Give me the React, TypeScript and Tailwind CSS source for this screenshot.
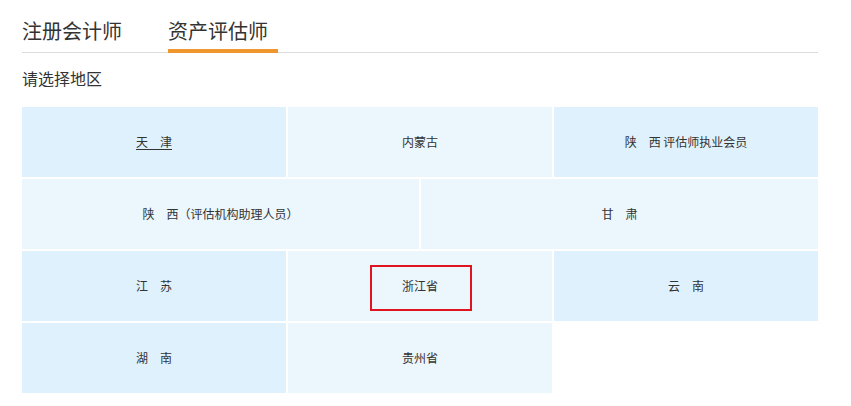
import React from "react";

type Cell = { label: string; dark: boolean; underline?: boolean; boxed?: boolean };

const rows: { cols: string; cells: Cell[] }[] = [
  {
    cols: "grid-cols-3",
    cells: [
      { label: "天　津", dark: true, underline: true },
      { label: "内蒙古", dark: false },
      { label: "陕　西 评估师执业会员", dark: true },
    ],
  },
  {
    cols: "grid-cols-2",
    cells: [
      { label: "陕　西（评估机构助理人员）", dark: false },
      { label: "甘　肃", dark: false },
    ],
  },
  {
    cols: "grid-cols-3",
    cells: [
      { label: "江　苏", dark: true },
      { label: "浙江省", dark: false, boxed: true },
      { label: "云　南", dark: true },
    ],
  },
  {
    cols: "grid-cols-3",
    cells: [
      { label: "湖　南", dark: true },
      { label: "贵州省", dark: false },
    ],
  },
];

export default function App() {
  return (
    <div
      className="min-h-[406px] w-[851px] bg-white text-[#333]"
      style={{ fontFamily: '"Noto Sans CJK SC", "Noto Sans", sans-serif' }}
    >
      <div className="ml-[22px] w-[796px] pt-[17px]">
        <div className="flex gap-[36px] border-b border-[#dddddd]">
          <div className="pr-[10px] pb-[7px] text-[20px] leading-[28px] text-[#333]">注册会计师</div>
          <div className="relative pr-[10px] pb-[7px] text-[20px] leading-[28px] text-[#333]">
            资产评估师
            <span className="absolute left-0 right-0 bottom-[-1px] h-[4px] bg-[#f0962e]" />
          </div>
        </div>
        <div className="mt-[13px] text-[16px] leading-[24px] text-[#333]">请选择地区</div>
        <div className="mt-[17px] flex flex-col gap-[2px]">
          {rows.map((row, i) => (
            <div key={i} className={`grid gap-[2px] ${row.cols}`}>
              {row.cells.map((c, j) => (
                <div
                  key={j}
                  className={`relative flex h-[70px] items-center justify-center text-[12px] leading-[18px] text-[#333] ${
                    c.dark ? "bg-[#dff1fd]" : "bg-[#ebf6fd]"
                  }`}
                >
                  <span className={c.underline ? "underline underline-offset-2" : ""}>{c.label}</span>
                  {c.boxed && (
                    <div className="absolute left-[82px] top-[14px] h-[46px] w-[102px] border-2 border-[#e0141e]" />
                  )}
                </div>
              ))}
            </div>
          ))}
        </div>
      </div>
    </div>
  );
}
